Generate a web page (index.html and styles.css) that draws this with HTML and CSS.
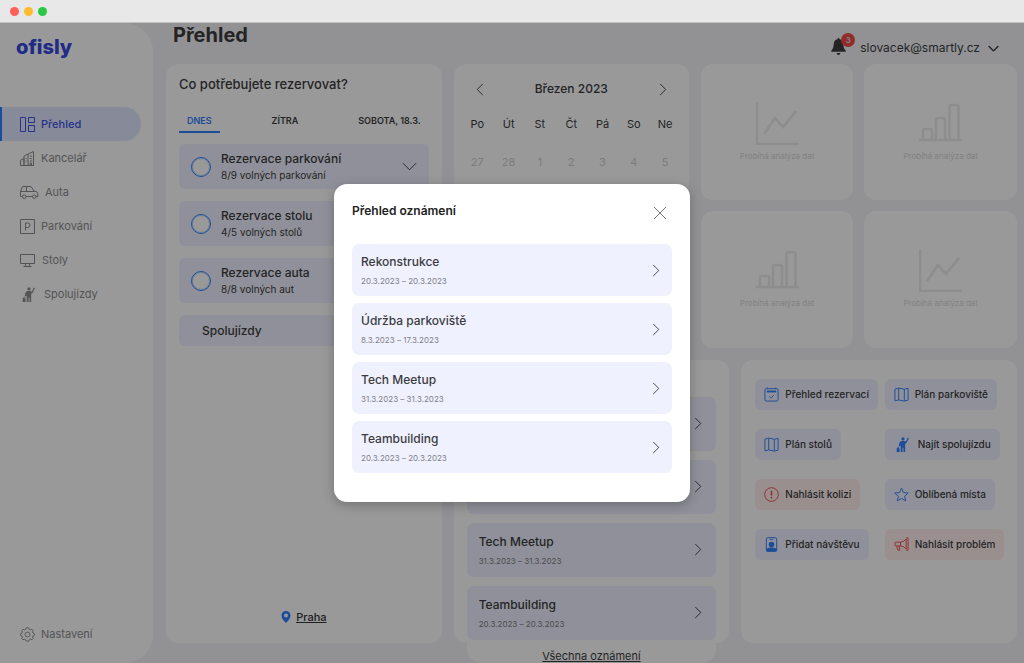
FILE: index.html
```html
<!DOCTYPE html>
<html lang="cs">
<head>
<meta charset="utf-8">
<meta name="viewport" content="width=device-width, initial-scale=1">
<title>Ofisly – Přehled</title>
<link rel="stylesheet" href="styles.css">
</head>
<body>
<svg class="sprite" aria-hidden="true">
  <symbol id="right" viewBox="0 0 8 14"><path d="M1 1l6 6-6 6"/></symbol>
  <symbol id="left" viewBox="0 0 8 14"><path d="M7 1L1 7l6 6"/></symbol>
  <symbol id="down" viewBox="0 0 16 9"><path d="M1 1l7 7 7-7"/></symbol>
  <symbol id="hitch" viewBox="0 0 15 16"><g fill="currentColor" stroke="none"><circle cx="7.500" cy="2" r="1.700"/><path d="M12.600 .5l1.200.7-2.600 5.200-1.400.8V16H8v-4.500H7V16H5V9L3.800 10H2.800L3.800 5.800 5.600 4.300h3.600l1.300.7z"/><path d="M.8 12h.7v-1h1.600v1h.7v4h-3z"/></g></symbol>
  <symbol id="map" viewBox="0 0 16 16"><path d="M1 2.200l4-1 6 1.200 4-1v12.600l-4 1-6-1.200-4 1zM5 1.200v12.600M11 2.400V15"/></symbol>
  <symbol id="line-chart" viewBox="0 0 43 43"><path d="M1 0v42h42M8 32l11-16 8 9 13-16"/></symbol>
  <symbol id="bar-chart" viewBox="0 0 43 43"><path d="M0 38h43M4 38V29q0-2 2-2h5q2 0 2 2v9M17 38V18q0-2 2-2h5q2 0 2 2v20M30.500 38V5q0-2 2-2h5q2 0 2 2v33"/></symbol>
</svg>

<div class="titlebar"><span class="dot red"></span><span class="dot yellow"></span><span class="dot green"></span></div>

<div class="app">
  <aside class="sidebar">
    <a class="logo" href="#">ofisly</a>
    <nav class="nav">
      <a class="nav-link active" href="#"><svg class="icon" width="15" height="15" viewBox="0 0 15 15"><path d="M.5.5h5v14h-5zM8.500.5h6v5h-6zM8.500 8.500h6v6h-6z"/></svg>Přehled</a>
      <a class="nav-link" href="#"><svg class="icon" width="15" height="15" viewBox="0 0 15 15"><path d="M.5 14.500V9.200L4 7.500v7M4 14.500V5l4-2v11.500M8 3l5.500-2.500v14H.5M9.800 5h2M9.800 7.500h2M9.800 10h2M5.500 7.500h1M5.500 10h1M10 14.500v-2.500h1.500v2.500"/></svg>Kancelář</a>
      <a class="nav-link" href="#"><svg class="icon" width="19" height="15" viewBox="0 0 19 15"><path d="M2.500 11.500h-2v-5l2-5h8.500l3 4.500 3 1q1 1 1 4.500h-2M6 11.500h6.500M.5 6.500h14M6.500 1.500v5"/><circle cx="4.200" cy="11.700" r="1.800"/><circle cx="14.300" cy="11.700" r="1.800"/></svg>Auta</a>
      <a class="nav-link" href="#"><svg class="icon" width="15" height="15" viewBox="0 0 15 15"><path d="M.5.5h14v14H.5zM5.500 11.500V4h2.300q2.200 0 2.200 2.200t-2.200 2.200H5.500"/></svg>Parkování</a>
      <a class="nav-link" href="#"><svg class="icon" width="16" height="15" viewBox="0 0 16 15"><path d="M.5 1.500h14v9H.5zM5.500 10.500v3M9.500 10.500v3M3.500 13.500h8"/></svg>Stoly</a>
      <a class="nav-link" href="#"><svg class="icon" width="18" height="15"><use href="#hitch"/></svg>Spolujízdy</a>
    </nav>
    <a class="nav-link settings" href="#"><svg class="icon" width="15" height="15" viewBox="0 0 16 16"><circle cx="8" cy="8" r="2.600"/><path d="M8 .8l1.500.3.500 1.500 1.200.5 1.600-.7 1.300 1.300-.7 1.600.5 1.200 1.500.6V8.900l-1.500.6-.5 1.200.7 1.600-1.300 1.300-1.600-.7-1.200.5-.5 1.500-1.500.3-1.500-.3-.5-1.500-1.200-.5-1.600.7-1.300-1.300.7-1.600-.5-1.200L.6 8.900V7.100l1.500-.6.5-1.200-.7-1.600 1.300-1.300 1.600.7L6 2.600l.5-1.500z"/></svg>Nastavení</a>
  </aside>

  <main class="main">
    <header class="header">
      <h1>Přehled</h1>
      <div class="user">
        <button class="bell" aria-label="Oznámení"><svg width="15" height="17" viewBox="0 0 15 17"><path fill="currentColor" d="M7.500 0q1 0 1.100 1.200Q12 2 12.200 6q.1 4.500 2.600 7v.8H.2V13q2.500-2.500 2.600-7Q3 2 6.400 1.200 6.500 0 7.500 0zM5.500 15h4q-.4 2-2 2t-2-2z"/></svg><span class="badge">3</span></button>
        <button class="account">slovacek@smartly.cz<svg class="icon bold" width="11" height="7" viewBox="0 0 16 9"><use href="#down"/></svg></button>
      </div>
    </header>

    <div class="board">
      <section class="card reserve">
        <h2>Co potřebujete rezervovat?</h2>
        <div class="tabs"><button class="tab current">DNES</button><button class="tab">ZÍTRA</button><button class="tab">SOBOTA, 18.3.</button></div>
        <div class="reserve-list">
          <label class="reserve-item"><input type="checkbox"><span class="grow"><strong>Rezervace parkování</strong><small>8/9 volných parkování</small></span><svg class="icon" width="15" height="9"><use href="#down"/></svg></label>
          <label class="reserve-item"><input type="checkbox"><span class="grow"><strong>Rezervace stolu</strong><small>4/5 volných stolů</small></span></label>
          <label class="reserve-item"><input type="checkbox"><span class="grow"><strong>Rezervace auta</strong><small>8/8 volných aut</small></span></label>
          <button class="ride">Spolujízdy</button>
        </div>
        <a class="place" href="#"><svg width="10" height="12" viewBox="0 0 10 12"><path fill="currentColor" fill-rule="evenodd" d="M5 0a4.500 4.500 0 0 1 4.500 4.500C9.500 8 5 12 5 12S.5 8 .5 4.500A4.500 4.500 0 0 1 5 0zm0 2.500a2 2 0 1 0 0 4 2 2 0 0 0 0-4z"/></svg><span>Praha</span></a>
      </section>

      <div class="side">
        <div class="top-row">
          <section class="card calendar">
            <div class="month"><button aria-label="Předchozí měsíc"><svg class="icon" width="8" height="13"><use href="#left"/></svg></button><h3>Březen 2023</h3><button aria-label="Další měsíc"><svg class="icon" width="8" height="13"><use href="#right"/></svg></button></div>
            <table>
              <thead><tr><th>Po</th><th>Út</th><th>St</th><th>Čt</th><th>Pá</th><th>So</th><th>Ne</th></tr></thead>
              <tbody><tr><td>27</td><td>28</td><td>1</td><td>2</td><td>3</td><td>4</td><td>5</td></tr></tbody>
            </table>
          </section>
          <div class="stats">
            <section class="card stat"><svg class="chart" width="43" height="43"><use href="#line-chart"/></svg><p>Probíhá analýza dat</p></section>
            <section class="card stat"><svg class="chart" width="43" height="43"><use href="#bar-chart"/></svg><p>Probíhá analýza dat</p></section>
            <section class="card stat"><svg class="chart" width="43" height="43"><use href="#bar-chart"/></svg><p>Probíhá analýza dat</p></section>
            <section class="card stat"><svg class="chart" width="43" height="43"><use href="#line-chart"/></svg><p>Probíhá analýza dat</p></section>
          </div>
        </div>
        <div class="bottom-row">
          <section class="card news">
            <div class="news-list">
              <button class="notice" aria-label="Rekonstrukce"><span class="grow"></span><svg class="icon" width="8" height="13"><use href="#right"/></svg></button>
              <button class="notice" aria-label="Údržba parkoviště"><span class="grow"></span><svg class="icon" width="8" height="13"><use href="#right"/></svg></button>
              <button class="notice"><span class="grow"><strong>Tech Meetup</strong><small>31.3.2023 – 31.3.2023</small></span><svg class="icon" width="8" height="13"><use href="#right"/></svg></button>
              <button class="notice"><span class="grow"><strong>Teambuilding</strong><small>20.3.2023 – 20.3.2023</small></span><svg class="icon" width="8" height="13"><use href="#right"/></svg></button>
              <a class="all" href="#">Všechna oznámení</a>
            </div>
          </section>
          <section class="card actions">
            <button class="action"><svg class="icon" width="15" height="15" viewBox="0 0 16 16"><path d="M2.500 1.800h11q1.500 0 1.500 1.500v10q0 1.700-1.500 1.700h-11Q1 15 1 13.300v-10q0-1.500 1.500-1.500zM3.500.5v1.300M12.500.5v1.300M5.500 10l2 2 3-3.500"/><path stroke-width="2" d="M3 4.800h10"/></svg>Přehled rezervací</button>
            <button class="action"><svg class="icon" width="15" height="15"><use href="#map"/></svg>Plán parkoviště</button>
            <button class="action"><svg class="icon" width="15" height="15"><use href="#map"/></svg>Plán stolů</button>
            <button class="action"><svg class="icon" width="18" height="15"><use href="#hitch"/></svg>Najít spolujízdu</button>
            <button class="action danger"><svg class="icon" width="15" height="15" viewBox="0 0 16 16"><circle cx="8" cy="8" r="7.300"/><path stroke-width="1.600" d="M8 4v5M8 10.500v1.700"/></svg>Nahlásit kolizi</button>
            <button class="action"><svg class="icon" width="15" height="15" viewBox="0 0 16 16"><path d="M8 1.200l2 4.700 5.200.5-3.900 3.400 1.200 5L8 12.200l-4.500 2.600 1.200-5L.8 6.400 6 5.900z"/></svg>Oblíbená místa</button>
            <button class="action"><svg class="icon" width="15" height="15" viewBox="0 0 16 16"><rect x="2.500" y=".7" width="11" height="14.600" rx="1.500"/><path d="M6 2.500h4"/><g fill="currentColor" stroke="none"><circle cx="8" cy="8" r="3"/><path d="M2.500 12.500q5.500-2.500 11 0v3h-11z"/></g></svg>Přidat návštěvu</button>
            <button class="action danger"><svg class="icon" width="15" height="15" viewBox="0 0 16 16"><path d="M1 6.500q0-1 1-1h5q4-.5 6-3.500v11q-2-3-6-3.500H2q-1 0-1-1zM13 1h2v13h-2M7 5.500v4M3 9.500l1 4.500h2.200L5.500 9.500"/></svg>Nahlásit problém</button>
          </section>
        </div>
      </div>
    </div>
  </main>

  <div class="overlay">
    <section class="modal" role="dialog" aria-modal="true" aria-labelledby="modal-title">
      <header class="modal-head"><h2 id="modal-title">Přehled oznámení</h2><button class="close" aria-label="Zavřít"><svg class="icon" width="14" height="14" viewBox="0 0 14 14"><path d="M1 1l12 12M13 1L1 13"/></svg></button></header>
      <div class="modal-list">
        <button class="notice"><span class="grow"><strong>Rekonstrukce</strong><small>20.3.2023 – 20.3.2023</small></span><svg class="icon" width="8" height="13"><use href="#right"/></svg></button>
        <button class="notice"><span class="grow"><strong>Údržba parkoviště</strong><small>8.3.2023 – 17.3.2023</small></span><svg class="icon" width="8" height="13"><use href="#right"/></svg></button>
        <button class="notice"><span class="grow"><strong>Tech Meetup</strong><small>31.3.2023 – 31.3.2023</small></span><svg class="icon" width="8" height="13"><use href="#right"/></svg></button>
        <button class="notice"><span class="grow"><strong>Teambuilding</strong><small>20.3.2023 – 20.3.2023</small></span><svg class="icon" width="8" height="13"><use href="#right"/></svg></button>
      </div>
    </section>
  </div>
</div>
</body>
</html>
```

FILE: styles.css
```css
* { box-sizing: border-box; }
body { margin: 0; min-height: 100vh; display: flex; flex-direction: column; font: 12px/16px Inter, "Open Sans", sans-serif; color: #3c3c3e; }
h1, h2, h3, p { margin: 0; }
button { border: 0; padding: 0; background: none; font: inherit; color: inherit; text-align: left; }
a { color: inherit; text-decoration: none; }
strong, small { display: block; }
.sprite { position: absolute; width: 0; height: 0; }
.icon { flex: none; fill: none; stroke: currentColor; stroke-width: 1; }
.bold { stroke-width: 2; }
.grow { flex: 1; }

.titlebar { height: 23px; display: flex; align-items: center; gap: 5px; padding-left: 10px; background: #e8e8e8; border-bottom: 1px solid #c4c4c4; }
.dot { width: 9px; height: 9px; border-radius: 50%; }
.red { background: #ff5f57; }
.yellow { background: #febc2e; }
.green { background: #28c840; }

.app { flex: 1; position: relative; display: flex; background: #f3f3f8; overflow: hidden; }

.sidebar { width: 153px; flex: none; display: flex; flex-direction: column; padding-bottom: 12px; background: #fff; border-radius: 0 28px 28px 0; }
.logo { padding: 10px 16px 46px; font-size: 20px; line-height: 28px; font-weight: 800; color: #3448e0; }
.nav { flex: 1; }
.nav-link { height: 34px; margin-right: 12px; padding-left: 20px; display: flex; align-items: center; gap: 6px; font-size: 11px; color: #8c8c90; }
.nav-link.active { padding-left: 18px; border-left: 2px solid #2f80ff; border-radius: 0 17px 17px 0; background: #dfe6ff; color: #4053e8; font-weight: 500; }

.main { flex: 1; min-width: 0; display: flex; flex-direction: column; padding: 0 7px 20px 13px; }
.header { height: 41px; padding: 0 18px 7px 7px; display: flex; justify-content: space-between; }
h1 { font-size: 20px; line-height: 24px; font-weight: 700; }
.user { display: flex; align-items: flex-end; gap: 14px; }
.bell { position: relative; height: 19px; }
.badge { position: absolute; left: 10px; top: -5px; width: 14px; height: 14px; border-radius: 50%; background: #f24a4a; color: #ddd; font-size: 8px; line-height: 14px; text-align: center; font-weight: 600; }
.account { display: flex; align-items: center; gap: 8px; line-height: 18px; }

.board { flex: 1; display: grid; grid-template-columns: repeat(3, minmax(0, 1fr)); gap: 12px; }
.card { background: #fff; border-radius: 12px; min-width: 0; }

.reserve { padding: 11px 13px 18px; display: flex; flex-direction: column; }
.reserve h2 { font-size: 13px; line-height: 18px; font-weight: 500; }
.tabs { display: flex; justify-content: space-between; margin: 17px 0 11px; }
.tab { height: 23px; padding: 0 8px; font-size: 9px; font-weight: 600; border-bottom: 2px solid transparent; }
.tab.current { color: #2f80ff; border-color: #2f80ff; }
.reserve-list { flex: 1; display: flex; flex-direction: column; gap: 12px; }
.reserve-item { height: 45px; padding: 0 12px; display: flex; align-items: center; gap: 10px; background: #eff1ff; border-radius: 6px; }
.reserve-item input { appearance: none; flex: none; width: 20px; height: 20px; margin: 0; border: 1px solid #2f80ff; outline: 1px solid #2f80ff55; outline-offset: -2px; border-radius: 50%; background: #fff; }
.reserve-item strong { font-weight: 500; line-height: 17px; }
.reserve-item small { font-size: 10px; }
.ride { height: 31px; padding: 0 23px; background: #eff1ff; border-radius: 6px; font-weight: 500; }
.place { align-self: center; display: flex; align-items: center; gap: 5px; font-size: 11px; font-weight: 500; color: #2f80ff; }
.place span { color: #333; text-decoration: underline; }

.side { grid-column: span 2; display: grid; grid-template-rows: repeat(2, minmax(0, 1fr)); gap: 12px; }
.top-row { display: grid; grid-template-columns: minmax(0, 235fr) minmax(0, 316fr); gap: 12px; }
.stats { display: grid; grid-template-columns: repeat(2, minmax(0, 1fr)); grid-template-rows: repeat(2, minmax(0, 1fr)); gap: 11px; }
.calendar { padding: 14px 8px; }
.month { display: flex; justify-content: space-between; align-items: center; padding: 0 14px; height: 22px; }
.month button { display: flex; }
h3 { font-size: 12px; font-weight: 500; }
table { width: 100%; margin-top: 5px; border-collapse: collapse; table-layout: fixed; }
th, td { height: 38px; padding: 0; text-align: center; font-size: 11px; font-weight: 400; }
td { color: #cfcfcf; }
.stat { display: flex; flex-direction: column; align-items: center; justify-content: center; gap: 4px; font-size: 8px; line-height: 14px; color: #d9d9d9; }
.chart { fill: none; stroke: #ececec; stroke-width: 2.500; }

.bottom-row { display: grid; grid-template-columns: repeat(2, minmax(0, 1fr)); gap: 12px; min-height: 0; }
.news { padding: 37px 13px 0; min-height: 0; }
.news-list { display: flex; flex-direction: column; gap: 9px; margin-bottom: -20px; background: #fff; border-radius: 0 0 14px 14px; }
.notice { display: flex; align-items: center; width: 100%; height: 52px; padding: 0 12px 0 9px; background: #eff1ff; border-radius: 7px; }
.notice strong { font-size: 12px; line-height: 18px; font-weight: 500; }
.notice small { font-size: 8px; line-height: 12px; margin-top: 4px; color: #808088; }
.news .notice { height: 54px; padding: 0 14px 0 12px; }
.all { align-self: center; font-size: 11px; line-height: 14px; text-decoration: underline; }
.actions { padding: 19px 3px 19px 14px; display: grid; grid-template-columns: repeat(2, minmax(0, 1fr)); align-content: start; justify-items: start; gap: 19px 0; }
.action { height: 31px; display: flex; align-items: center; gap: 6px; padding: 0 9px; background: #eff1ff; border-radius: 6px; font-size: 10px; font-weight: 500; white-space: nowrap; }
.action .icon { color: #2f80ff; }
.action.danger { background: #ffefee; }
.action.danger .icon { color: #f24a4a; }

.overlay { position: absolute; inset: 0; display: grid; place-items: center; background: rgb(0 0 0 / 40%); }
.modal { width: 356px; max-width: 94%; padding: 18px 18px 29px; background: #fff; border-radius: 13px; box-shadow: 0 3px 12px rgb(0 0 0 / 25%); }
.modal-head { display: flex; justify-content: space-between; padding: 0 5px 24px 0; }
.modal-head h2 { font-size: 12px; line-height: 18px; font-weight: 600; color: #222; }
.close { display: flex; align-self: flex-end; color: #777; }
.modal-list { display: flex; flex-direction: column; gap: 7px; }
```
